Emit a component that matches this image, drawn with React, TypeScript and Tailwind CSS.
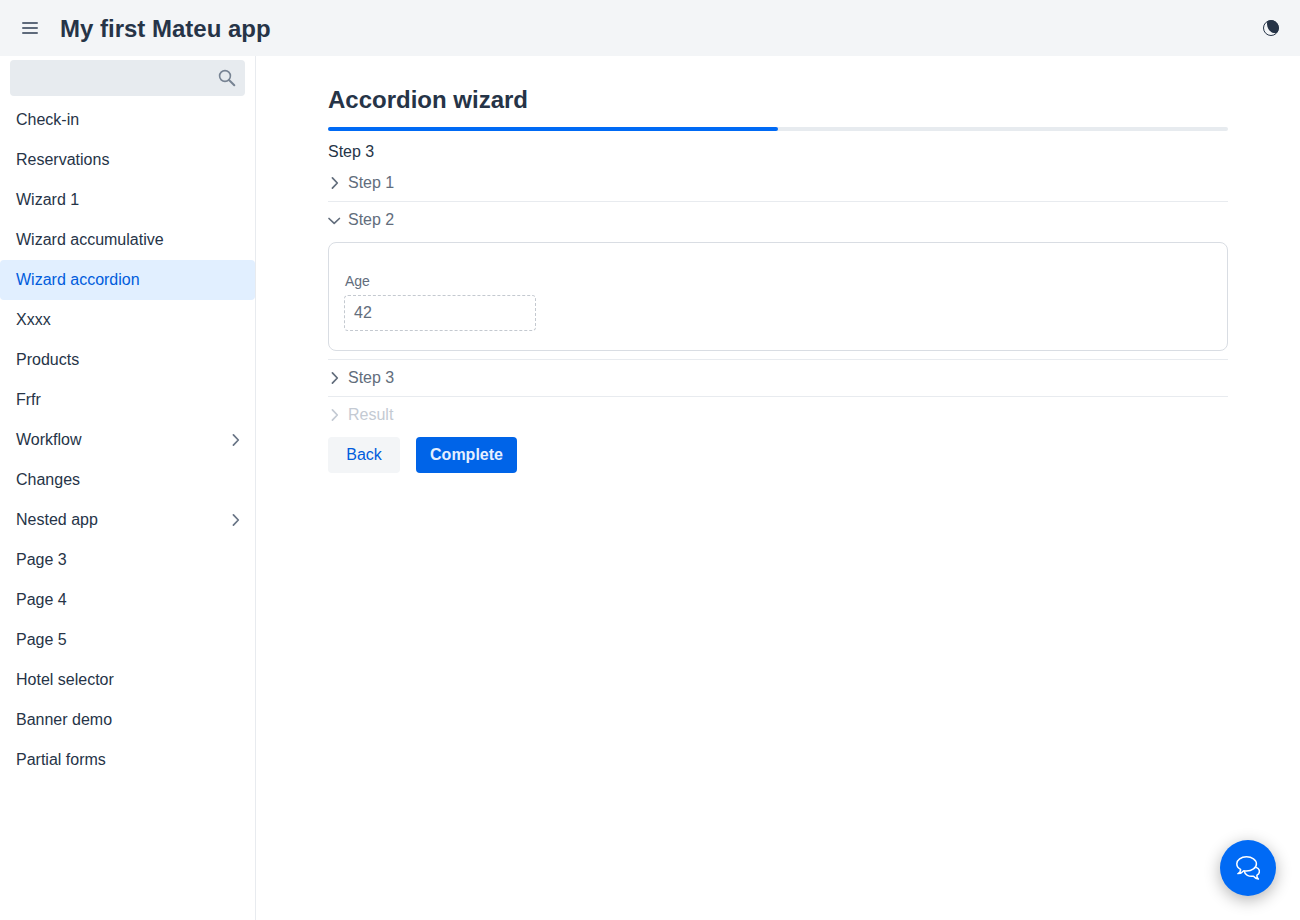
type MenuOption = { label: string; selected?: boolean; nested?: boolean };

const menu: MenuOption[] = [
  { label: "Check-in" },
  { label: "Reservations" },
  { label: "Wizard 1" },
  { label: "Wizard accumulative" },
  { label: "Wizard accordion", selected: true },
  { label: "Xxxx" },
  { label: "Products" },
  { label: "Frfr" },
  { label: "Workflow", nested: true },
  { label: "Changes" },
  { label: "Nested app", nested: true },
  { label: "Page 3" },
  { label: "Page 4" },
  { label: "Page 5" },
  { label: "Hotel selector" },
  { label: "Banner demo" },
  { label: "Partial forms" },
];

function Chevron({ className = "" }: { className?: string }) {
  return (
    <svg className={`shrink-0 ${className}`} width="12" height="14" viewBox="0 0 12 14" fill="none" stroke="currentColor" strokeWidth="1.7" strokeLinecap="round" strokeLinejoin="round">
      <path d="M4.4 1.9 9.3 7 4.4 12.1" />
    </svg>
  );
}

function ChevronDown() {
  return (
    <svg className="mt-0.5 shrink-0 overflow-visible" width="12" height="14" viewBox="0 0 12 14" fill="none" stroke="currentColor" strokeWidth="1.7" strokeLinecap="round" strokeLinejoin="round">
      <path d="M1 4.5 6.2 9.3 11.4 4.5" />
    </svg>
  );
}

function StepSummary({ label, opened, disabled }: { label: string; opened?: boolean; disabled?: boolean }) {
  return (
    <button
      disabled={disabled}
      className={`box-content flex h-9 w-full items-center gap-2 text-left ${disabled ? "text-[#c4cad3]" : "text-[#626d7c]"}`}
    >
      {opened ? <ChevronDown /> : <Chevron />}
      <span>{label}</span>
    </button>
  );
}

function Header() {
  return (
    <header className="flex h-14 shrink-0 items-center bg-[#f3f5f7] pr-[21px] pl-[22px]">
      <svg width="16" height="14" viewBox="0 0 16 14" fill="none" stroke="#5e6a7b" strokeWidth="2" strokeLinecap="round">
        <path d="M1 2H15M1 7H15M1 12H15" />
      </svg>
      <h2 className="ml-[22px] pt-0.5 text-2xl font-bold">My first Mateu app</h2>
      <svg className="ml-auto" width="16" height="16" viewBox="0 0 16 16" fill="currentColor">
        <circle cx="8" cy="8" r="7.5" fill="none" stroke="currentColor" />
        <path d="M4.4 1.3C2.6 7 7.2 14 13.5 13.1A7.5 7.5 0 0 0 4.4 1.3Z" />
      </svg>
    </header>
  );
}

function Sidebar() {
  return (
    <aside className="w-64 shrink-0 border-r border-[#e8ebef] pt-1">
      <div className="mx-2.5 flex h-9 items-center justify-end rounded-[4px] bg-[#e7ebef] pr-[9px]">
        <svg width="18" height="18" viewBox="0 0 18 18" fill="none" stroke="#778393">
          <circle cx="7" cy="7" r="5.4" strokeWidth="1.6" />
          <path d="M11 11 16.3 16.3" strokeWidth="2" strokeLinecap="round" />
        </svg>
      </div>
      <nav className="mt-1">
        {menu.map((option) => (
          <a
            key={option.label}
            className={`flex h-10 items-center justify-between rounded-[4px] pr-3.5 pl-4 ${option.selected ? "bg-[#e1efff] text-[#005cdc]" : ""}`}
          >
            {option.label}
            {option.nested && <Chevron className="text-[#697586]" />}
          </a>
        ))}
      </nav>
    </aside>
  );
}

function Wizard() {
  return (
    <main className="ml-18 w-[900px] pt-7">
      <h2 className="text-2xl font-bold">Accordion wizard</h2>
      <div className="mt-[11px] h-1 rounded-[2px] bg-[#e7ebef]">
        <div className="h-full w-1/2 rounded-[2px] bg-[#006af5]" />
      </div>
      <p className="mt-2 leading-[26px]">Step 3</p>
      <div className="divide-y divide-[#e8ebef]">
        <StepSummary label="Step 1" />
        <div className="pb-2">
          <StepSummary label="Step 2" opened />
          <div className="mt-1 h-[109px] rounded-lg border border-[#d9dde3] px-[15px] pt-[29px]">
            <label className="block pl-px text-sm leading-[19px] text-[#626d7c]">Age</label>
            <div className="mt-1 flex h-9 w-48 items-center rounded-[4px] border border-dashed border-[#c4c9d0] pl-[9px] text-[#626d7c]">
              42
            </div>
          </div>
        </div>
        <StepSummary label="Step 3" />
        <StepSummary label="Result" disabled />
      </div>
      <div className="mt-1 flex gap-4">
        <button className="h-9 w-18 rounded-[4px] bg-[#f3f5f7] text-[#005cdc]">Back</button>
        <button className="h-9 w-[101px] rounded-[4px] bg-[#0064e8] font-bold text-[#e5efff]">Complete</button>
      </div>
    </main>
  );
}

export default function App() {
  return (
    <div className="flex h-[920px] flex-col bg-white font-['Liberation_Sans',Arial,sans-serif] text-base text-[#263447]">
      <Header />
      <div className="flex flex-1">
        <Sidebar />
        <Wizard />
      </div>
      <button className="fixed right-6 bottom-6 flex size-14 items-center justify-center rounded-full bg-[#006af5] text-white shadow-[0_4px_16px_rgba(0,0,0,0.3)]">
        <svg width="24" height="24" viewBox="0 0 24 24" fill="none" stroke="currentColor" strokeWidth="1.5" strokeLinejoin="round">
          <path d="M4.6 13.4C2.1 12.2.8 10 .8 7.8.8 3.9 5.1.8 10.5.8s9.9 3.1 9.9 7.1-4.5 7.1-9.9 7.1c-.9 0-1.8-.1-2.7-.3-1.4 1.7-3.4 2.8-5.9 2.9 1.7-.9 2.7-2.3 2.7-4.2Z" />
          <path d="M8.3 15.1c.4 3.6 4.7 5.9 9.2 5.1 1.4 1.7 2.8 2.6 4.9 2.9-1.2-1-1.7-2.3-1.4-3.9 1.6-.9 2.4-2.4 2.4-3.8 0-1.8-1.4-3.5-3.7-4.2" />
        </svg>
      </button>
    </div>
  );
}
